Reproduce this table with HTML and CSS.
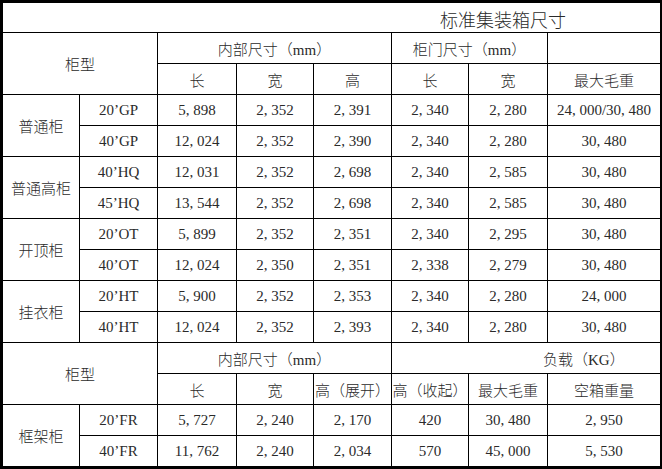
FILE: index.html
```html
<!DOCTYPE html>
<html lang="zh">
<head>
<meta charset="utf-8">
<title>标准集装箱尺寸</title>
<link rel="stylesheet" href="styles.css">
</head>
<body>
<div class="sheet">
  <div class="c title">标准集装箱尺寸</div>

  <div class="c type r2 s2">柜型</div>
  <div class="c s3">内部尺寸（mm）</div>
  <div class="c s2">柜门尺寸（mm）</div>
  <div class="c"></div>
  <div class="c">长</div>
  <div class="c">宽</div>
  <div class="c">高</div>
  <div class="c">长</div>
  <div class="c">宽</div>
  <div class="c">最大毛重</div>

  <div class="c type r2">普通柜</div>
  <div class="c">20’GP</div><div class="c">5, 898</div><div class="c">2, 352</div><div class="c">2, 391</div><div class="c">2, 340</div><div class="c">2, 280</div><div class="c">24, 000/30, 480</div>
  <div class="c">40’GP</div><div class="c">12, 024</div><div class="c">2, 352</div><div class="c">2, 390</div><div class="c">2, 340</div><div class="c">2, 280</div><div class="c">30, 480</div>

  <div class="c type r2">普通高柜</div>
  <div class="c">40’HQ</div><div class="c">12, 031</div><div class="c">2, 352</div><div class="c">2, 698</div><div class="c">2, 340</div><div class="c">2, 585</div><div class="c">30, 480</div>
  <div class="c">45’HQ</div><div class="c">13, 544</div><div class="c">2, 352</div><div class="c">2, 698</div><div class="c">2, 340</div><div class="c">2, 585</div><div class="c">30, 480</div>

  <div class="c type r2">开顶柜</div>
  <div class="c">20’OT</div><div class="c">5, 899</div><div class="c">2, 352</div><div class="c">2, 351</div><div class="c">2, 340</div><div class="c">2, 295</div><div class="c">30, 480</div>
  <div class="c">40’OT</div><div class="c">12, 024</div><div class="c">2, 350</div><div class="c">2, 351</div><div class="c">2, 338</div><div class="c">2, 279</div><div class="c">30, 480</div>

  <div class="c type r2">挂衣柜</div>
  <div class="c">20’HT</div><div class="c">5, 900</div><div class="c">2, 352</div><div class="c">2, 353</div><div class="c">2, 340</div><div class="c">2, 280</div><div class="c">24, 000</div>
  <div class="c">40’HT</div><div class="c">12, 024</div><div class="c">2, 352</div><div class="c">2, 393</div><div class="c">2, 340</div><div class="c">2, 280</div><div class="c">30, 480</div>

  <div class="c type r2 s2">柜型</div>
  <div class="c s3">内部尺寸（mm）</div>
  <div class="c s3 load">负载（KG）</div>
  <div class="c">长</div>
  <div class="c">宽</div>
  <div class="c">高（展开）</div>
  <div class="c">高（收起）</div>
  <div class="c">最大毛重</div>
  <div class="c">空箱重量</div>

  <div class="c type r2">框架柜</div>
  <div class="c">20’FR</div><div class="c">5, 727</div><div class="c">2, 240</div><div class="c">2, 170</div><div class="c">420</div><div class="c">30, 480</div><div class="c">2, 950</div>
  <div class="c">40’FR</div><div class="c">11, 762</div><div class="c">2, 240</div><div class="c">2, 034</div><div class="c">570</div><div class="c">45, 000</div><div class="c">5, 530</div>
</div>
</body>
</html>
```

FILE: styles.css
```css
html, body {
  margin: 0;
  padding: 0;
  background: #fff;
}

.sheet {
  width: 662px;
  height: 469px;
  box-sizing: border-box;
  padding: 3px 2px 3px 3px;
  background: #000;
  display: grid;
  grid-template-columns: 76px 77px 78px 76px 77px 76px 78px 112px;
  grid-template-rows: 29px repeat(14, 30px);
  column-gap: 1px;
  row-gap: 1px;
  font-family: "Liberation Serif", "Noto Sans CJK SC", serif;
  font-size: 15px;
  font-weight: 300;
  color: #2a2a2a;
}

.c {
  background: #fff;
  display: flex;
  align-items: center;
  justify-content: center;
  white-space: nowrap;
  overflow: hidden;
}

.title {
  grid-column: 1 / -1;
  justify-content: flex-start;
  padding-left: 437px;
  font-size: 18px;
  padding-top: 2px;
}

.s2 { grid-column: span 2; }
.s3 { grid-column: span 3; }
.r2 { grid-row: span 2; }

.type {
  font-size: 15px;
}

.load {
  justify-content: flex-start;
  padding-left: 151px;
}
```
